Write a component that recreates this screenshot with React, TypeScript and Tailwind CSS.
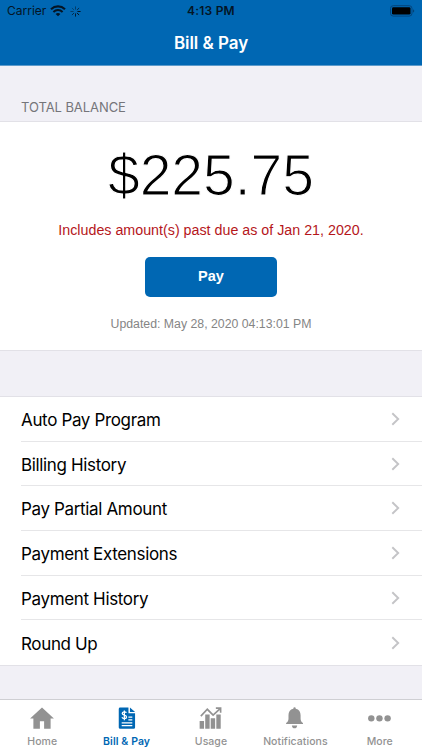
import type { ReactNode } from "react"

const menuItems = [
    "Auto Pay Program",
    "Billing History",
    "Pay Partial Amount",
    "Payment Extensions",
    "Payment History",
    "Round Up",
]

const StatusBar = () => {
    return (
        <div className="grid h-[22px] grid-cols-3 items-center pl-[7px] pr-[7px] text-[#041525]">
            <div className="flex items-center">
                <span className="text-[12px]">Carrier</span>
                <svg className="ml-[4px]" width="16" height="12" viewBox="0 0 16 12" fill="none" stroke="currentColor">
                    <path d="M1 4.2C5 .5 11 .5 15 4.2" strokeWidth="2.2" />
                    <path d="M3.4 6.9C6 4.5 10 4.5 12.6 6.9" strokeWidth="2" />
                    <path d="M8 11.3L5.6 8.9C7 7.7 9 7.7 10.4 8.9Z" fill="currentColor" stroke="none" />
                </svg>
                <svg className="ml-[4px]" width="11" height="11" viewBox="0 0 11 11" stroke="currentColor" strokeLinecap="round" strokeWidth="1">
                    <path d="M5.5 .8V3.2" opacity=".5" />
                    <path d="M8.8 2.2L7.3 3.8" opacity=".7" />
                    <path d="M10.2 5.5H7.8" />
                    <path d="M8.8 8.8L7.3 7.2" />
                    <path d="M5.5 10.2V7.8" opacity=".9" />
                    <path d="M2.2 8.8L3.8 7.2" opacity=".7" />
                    <path d="M.8 5.5H3.2" opacity=".5" />
                    <path d="M2.2 2.2L3.8 3.8" opacity=".4" />
                </svg>
            </div>
            <span className="text-center text-[12px] font-semibold tracking-[0.2px]">4:13 PM</span>
            <svg className="justify-self-end" width="25" height="12" viewBox="0 0 25 12">
                <rect x=".5" y=".7" width="21.5" height="10.4" rx="2.8" fill="none" stroke="#04457c" />
                <rect x="2" y="2.2" width="18.5" height="7.4" rx="1.4" fill="#000" />
                <path d="M23.3 4.2C24.5 4.7 24.5 7.1 23.3 7.6Z" fill="#04355f" />
            </svg>
        </div>
    )
}

const Chevron = () => {
    return (
        <svg width="9" height="14" viewBox="0 0 9 14" fill="none" stroke="#c4c4c7" strokeWidth="1.9">
            <path d="M1.3 1.2L7.2 7L1.3 12.8" />
        </svg>
    )
}

const HomeIcon = () => {
    return (
        <svg width="26" height="24" viewBox="0 0 26 24" fill="#929292">
            <path d="M13 .6L26 12.6H22.4V23.6H15.3V15.6H10.7V23.6H3.6V12.6H0Z" />
        </svg>
    )
}

const BillIcon = () => {
    return (
        <svg width="18" height="24" viewBox="0 0 18 24">
            <path d="M1.5 .6H10.6V6.8H17.8V22.3Q17.8 23.8 16.3 23.8H1.5Q0 23.8 0 22.3V2.1Q0 .6 1.5 .6Z" fill="#0067b3" />
            <path d="M12.2 .6L17.8 5.5H12.2Z" fill="#0067b3" />
            <g fill="none" stroke="#fff" strokeWidth="1.4">
                <path d="M8.3 6.4C7.6 4.7 3.8 4.8 3.8 7.1C3.8 9.5 8.5 8.2 8.5 10.8C8.5 13.2 4.3 13.2 3.5 11.3M6.1 3.7V14.5" />
                <path d="M10.5 11H14.8M10.5 14H14.8M3.2 17.2H14.8M3.2 20.2H14.8" />
            </g>
        </svg>
    )
}

const UsageIcon = () => {
    return (
        <svg width="24" height="24" viewBox="0 0 24 24" fill="#929292">
            <path d="M-.4 15.3H4.4V23.7H-.4ZM5.7 8.3H10.5V23.7H5.7ZM11.7 12.4H16.5V23.7H11.7ZM17.8 8.3H22.6V23.7H17.8Z" />
            <path d="M.9 10L8 2.5L14.3 8.8L22 1.7M17.3 1.2H22.5V6.2" fill="none" stroke="#929292" strokeWidth="1.8" />
        </svg>
    )
}

const BellIcon = () => {
    return (
        <svg width="20" height="24" viewBox="0 0 20 24" fill="#929292">
            <path d="M8.2 2V1.5Q8.2 .4 9.5 .4Q10.8 .4 10.8 1.5V2C14.5 2.7 16.1 5.5 16.1 9V12.5C16.1 15 17 16.4 18.7 17.5V18.6H.3V17.5C2 16.4 2.9 15 2.9 12.5V9C2.9 5.5 4.5 2.7 8.2 2Z" />
            <path d="M6.6 20.1H12.4C12.2 22.2 11 23.2 9.5 23.2S6.8 22.2 6.6 20.1Z" />
        </svg>
    )
}

const MoreIcon = () => {
    return (
        <svg width="26" height="24" viewBox="0 0 26 24" fill="#929292">
            <circle cx="3.5" cy="12.4" r="3.5" />
            <circle cx="12.4" cy="12.4" r="3.5" />
            <circle cx="21.3" cy="12.4" r="3.5" />
        </svg>
    )
}

const Tab = ({ label, active, children }: { label: string; active?: boolean; children: ReactNode }) => {
    return (
        <div className={active ? "flex w-1/5 flex-col items-center text-[#0067b3]" : "flex w-1/5 flex-col items-center text-[#929292]"}>
            {children}
            <span className={active ? "mt-[4px] text-[10.5px] leading-[17px] font-semibold tracking-[0.1px]" : "mt-[4px] text-[10.5px] leading-[17px] font-medium tracking-[0.05px]"}>
                {label}
            </span>
        </div>
    )
}

const App = () => {
    return (
        <div className="flex h-[750px] w-[422px] flex-col overflow-hidden bg-[#f1f0f6] font-['Inter','Liberation_Sans',sans-serif] text-black">
            <header className="h-[66px] border-b border-[#5d9bcb] bg-[#0067b3]">
                <StatusBar />
                <h1 className="pt-[9px] text-center text-[17px] leading-6 font-semibold tracking-[-0.05px] text-white">Bill &amp; Pay</h1>
            </header>

            <h2 className="h-[55px] pt-[31px] pl-[21px] text-[13px] leading-5 tracking-[-0.07px] text-[#75757a]">TOTAL BALANCE</h2>
            <section className="flex h-[230px] flex-col items-center border-y border-[#e2e1e7] bg-white font-['Liberation_Sans',sans-serif]">
                <p className="mt-[20px] text-[57px] leading-[66px] [-webkit-text-stroke:1.2px_white]">$225.75</p>
                <p className="mt-[12px] text-[14.28px] leading-5 text-[#b5161b]">Includes amount(s) past due as of Jan 21, 2020.</p>
                <button className="mt-[17px] h-[40px] w-[132px] rounded-[5px] bg-[#0067b3] text-[14.5px] font-bold text-white">Pay</button>
                <p className="mt-[17px] text-[12.3px] leading-5 text-[#858585]">Updated: May 28, 2020 04:13:01 PM</p>
            </section>

            <ul className="mt-[45px] border-y border-[#e2e1e7] bg-white pl-[21px]">
                {menuItems.map((item) => (
                    <li key={item} className="flex h-[44.7px] items-center justify-between border-b border-[#e6e6e8] pr-[22px] last:border-b-0">
                        <span className="pt-0.5 text-[17px] leading-6 tracking-[-0.35px]">{item}</span>
                        <Chevron />
                    </li>
                ))}
            </ul>

            <nav className="mt-auto flex h-[51px] border-t border-[#cfcfd3] bg-white pt-[7px]">
                <Tab label="Home"><HomeIcon /></Tab>
                <Tab label="Bill & Pay" active><BillIcon /></Tab>
                <Tab label="Usage"><UsageIcon /></Tab>
                <Tab label="Notifications"><BellIcon /></Tab>
                <Tab label="More"><MoreIcon /></Tab>
            </nav>
        </div>
    )
}

export default App
